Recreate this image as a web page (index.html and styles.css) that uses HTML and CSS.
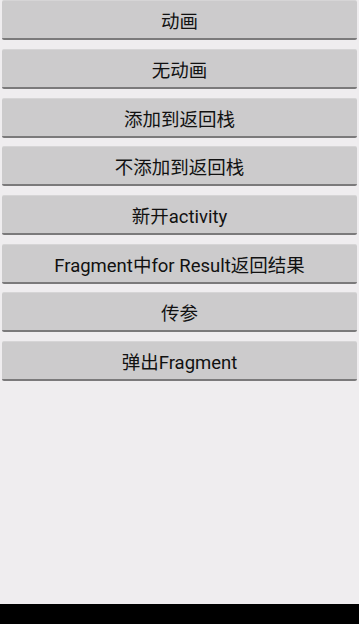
FILE: index.html
```html
<!DOCTYPE html>
<html lang="zh-CN">
<head>
    <meta charset="UTF-8">
    <title>Fragment</title>
    <link rel="stylesheet" href="styles.css">
</head>
<body>

<div class="screen">
    <div class="btn-list">
        <button class="btn">动画</button>
        <button class="btn">无动画</button>
        <button class="btn">添加到返回栈</button>
        <button class="btn">不添加到返回栈</button>
        <button class="btn">新开activity</button>
        <button class="btn">Fragment中for Result返回结果</button>
        <button class="btn">传参</button>
        <button class="btn">弹出Fragment</button>
    </div>
</div>

<!-- нижняя панель -->
<div class="nav-bar"></div>

</body>
</html>
```

FILE: styles.css
```css
body {
    margin: 0;
    background-color: #000;
    font-family: Roboto, "Noto Sans CJK SC", sans-serif;
}
.screen {
    height: 604px;
    background-color: #efedef;
    overflow: hidden;
}
.btn-list {
    display: flex;
    flex-direction: column;
    gap: 8.67px;
    padding: 0.33px 2px 0;
}
.btn {
    height: 40px;
    margin: 0;
    padding: 1px 0 0;
    border: none;
    border-top: 1px solid #d6d5d6;
    border-bottom: 2px solid #7b7a7b;
    border-radius: 2px;
    background-color: #cccbcc;
    color: #111;
    font-family: inherit;
    font-size: 18.5px;
    text-align: center;
}
.nav-bar {
    height: 20px;
    background-color: #000;
}
```
